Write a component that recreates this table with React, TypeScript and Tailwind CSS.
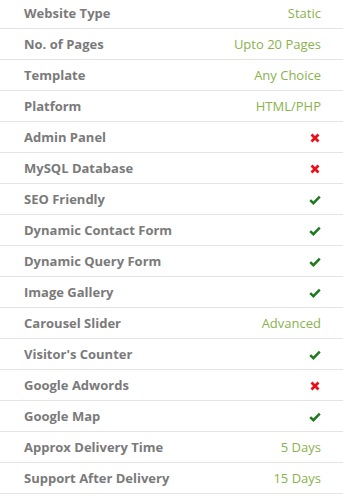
import React from "react";

type Val = string | "yes" | "no";

const ROWS: { label: string; value: Val }[] = [
  { label: "Website Type", value: "Static" },
  { label: "No. of Pages", value: "Upto 20 Pages" },
  { label: "Template", value: "Any Choice" },
  { label: "Platform", value: "HTML/PHP" },
  { label: "Admin Panel", value: "no" },
  { label: "MySQL Database", value: "no" },
  { label: "SEO Friendly", value: "yes" },
  { label: "Dynamic Contact Form", value: "yes" },
  { label: "Dynamic Query Form", value: "yes" },
  { label: "Image Gallery", value: "yes" },
  { label: "Carousel Slider", value: "Advanced" },
  { label: "Visitor's Counter", value: "yes" },
  { label: "Google Adwords", value: "no" },
  { label: "Google Map", value: "yes" },
  { label: "Approx Delivery Time", value: "5 Days" },
  { label: "Support After Delivery", value: "15 Days" },
];

function Cross() {
  return (
    <svg width="10" height="10" viewBox="0 0 10 10" className="mr-[1px]">
      <path d="M1.5 1.5 L8.5 8.5 M8.5 1.5 L1.5 8.5" stroke="#e3121b" strokeWidth="2.8" strokeLinecap="butt" />
    </svg>
  );
}

function Check() {
  return (
    <svg width="12" height="10" viewBox="0 0 12 10">
      <path d="M1.2 5.2 L4.4 8.2 L10.8 1.6" fill="none" stroke="#1d7a1d" strokeWidth="2.5" strokeLinejoin="miter" />
    </svg>
  );
}

export default function App() {
  return (
    <div className="w-[343px] h-[496px] overflow-hidden bg-white font-['Open_Sans',sans-serif]">
      <div className="-mt-[2px]">
        {ROWS.map((row) => (
          <div
            key={row.label}
            className="flex h-[31px] items-center justify-between border-b border-[#e4e4e4] pl-6 pr-[22px] pt-[2px] text-[13px]"
          >
            <span className="font-bold text-[#7a7a7a]">{row.label}</span>
            {row.value === "yes" ? (
              <Check />
            ) : row.value === "no" ? (
              <Cross />
            ) : (
              <span className="text-[#8ab24e]">{row.value}</span>
            )}
          </div>
        ))}
      </div>
    </div>
  );
}
